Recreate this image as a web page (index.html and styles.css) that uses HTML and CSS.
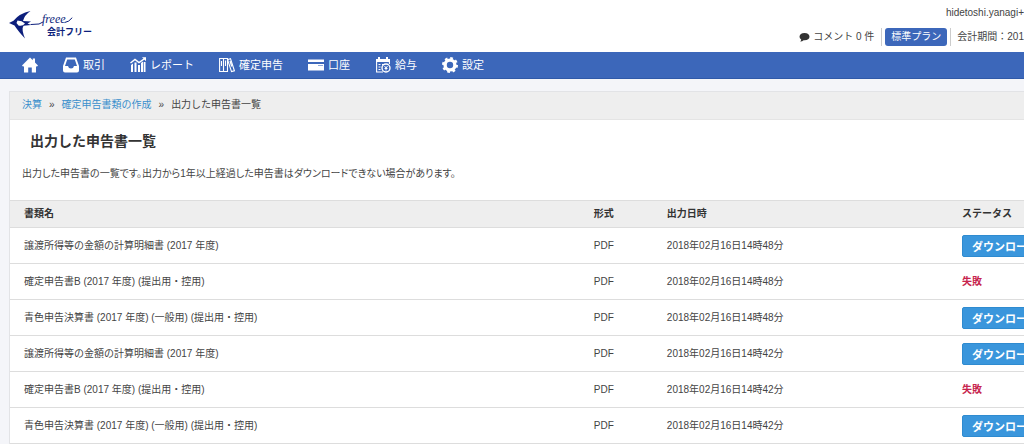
FILE: index.html
```html
<!DOCTYPE html>
<html lang="ja">
<head>
<meta charset="utf-8">
<meta name="viewport" content="width=device-width, initial-scale=1">
<title>出力した申告書一覧</title>
<link rel="stylesheet" href="styles.css">
</head>
<body>
<header class="header">
  <a class="logo" href="#" aria-label="会計フリー">
    <svg width="84" height="30" viewBox="0 0 84 30">
      <path class="logo-fill" fill-rule="evenodd" d="M0 13L4.500 10.800Q10 3.500 21.500 1Q15.500 5 14 11L22 11.500L18.500 13.500L22 15L14.500 15.800Q13 18 13.700 21Q14.300 24.500 16 28.500Q9 21 5.500 15.500ZM8.500 10.500L7.500 13L9.500 15.500Q13.500 16.500 16 13.500Q13 10.700 8.500 10.500Z"/>
      <path class="logo-line" d="M22 14.500L30 14L34 12"/>
      <path class="logo-line" d="M56 12.500Q60 12 63 8"/>
      <text class="logo-script" x="33" y="13">freee</text>
      <text class="logo-name" x="38" y="25">会計フリー</text>
    </svg>
  </a>
  <div class="account">
    <div class="user">hidetoshi.yanagi+</div>
    <div class="status">
      <a class="comments" href="#">
        <svg width="11" height="10" viewBox="0 0 11 10"><path fill="currentColor" d="M5.500 1C8.500 1 10.500 2.600 10.500 4.700S8.500 8.300 5.500 8.300L4.600 8.200Q3.200 9.500 1.200 9.400Q2.200 8.600 2.200 7.500Q.5 6.400 .5 4.700C.5 2.600 2.500 1 5.500 1Z"/></svg>
        <span>コメント 0 件</span>
      </a>
      <span class="plan-wrap"><a class="plan" href="#">標準プラン</a></span>
      <span class="period">会計期間：201</span>
    </div>
  </div>
</header>
<nav class="nav">
  <a class="nav-item" href="#" aria-label="ホーム">
    <svg width="16" height="16" viewBox="0 0 16 16"><path fill="currentColor" d="M8 .5L10.800 3.300V1.500H13V5.500L16 8.500L14.800 9.700L14 9V15.500H9.800V10.500H6.200V15.500H2V9L1.200 9.700L0 8.500Z"/></svg>
  </a>
  <a class="nav-item" href="#">
    <svg width="16" height="16" viewBox="0 0 16 16"><path fill="currentColor" fill-rule="evenodd" d="M3 .5H13L16 9V13.500Q16 15.500 14 15.500H2Q0 15.500 0 13.500V9ZM4.200 2.500L2 9H5Q5.500 11.500 8 11.500T11 9H14L11.800 2.500Z"/></svg>
    <span>取引</span>
  </a>
  <a class="nav-item" href="#">
    <svg width="16" height="16" viewBox="0 0 16 16"><path fill="none" stroke="currentColor" stroke-width="1.500" d="M.5 6L5 2.500L9 5.500L15.500 1"/><path fill="currentColor" d="M12 .3H16V4.200ZM1 8L3 6.500V15H1ZM4.500 5.500H6.500V15H4.500ZM8 8H10V15H8ZM11 6L13 4.500V15H11ZM13.700 5H15.500V15H13.700Z"/></svg>
    <span>レポート</span>
  </a>
  <a class="nav-item" href="#">
    <svg width="16" height="16" viewBox="0 0 16 16"><path fill="none" stroke="currentColor" stroke-width="1.100" d="M.6 1.500H4.500V14.500H.6ZM4.500 1.500H8.500V14.500H4.500ZM9 2.500L11.500 1.700L15.400 13.800L12.500 14.600L9 4ZM2.500 4V9M6.500 3.500V9M11 4L12.700 9.500"/></svg>
    <span>確定申告</span>
  </a>
  <a class="nav-item" href="#">
    <svg width="16" height="16" viewBox="0 0 16 16"><path fill="currentColor" d="M0 2.500H16V5H0ZM0 7H16V13.500H0Z"/><path class="nav-cut" d="M10 8.500H15"/></svg>
    <span>口座</span>
  </a>
  <a class="nav-item" href="#">
    <svg width="16" height="16" viewBox="0 0 16 16"><path fill="currentColor" d="M1 2H3V0H5V2H11V0H13V2H15V5H1Z"/><path fill="none" stroke="currentColor" stroke-width="1.100" d="M1.600 5V15H8M14.400 5V7M3.500 7.500H5.500M7 7.500H9M3.500 10H5.500M3.500 12.500H5.500"/><circle cx="11" cy="11" r="4" fill="none" stroke="currentColor" stroke-width="1.400"/><path fill="none" stroke="currentColor" d="M9.500 9L11 11L12.500 9M11 11V13.500M9.500 11.500H12.500"/></svg>
    <span>給与</span>
  </a>
  <a class="nav-item" href="#">
    <svg width="16" height="16" viewBox="0 0 16 16"><circle cx="8" cy="8" r="4.900" fill="none" stroke="currentColor" stroke-width="3.400"/><circle cx="8" cy="8" r="7" fill="none" stroke="currentColor" stroke-width="2" stroke-dasharray="2.750 2.750"/></svg>
    <span>設定</span>
  </a>
</nav>
<main class="panel">
  <div class="breadcrumb">
    <a href="#">決算</a><span>»</span><a href="#">確定申告書類の作成</a><span>»</span><span>出力した申告書一覧</span>
  </div>
  <h1 class="title">出力した申告書一覧</h1>
  <p class="lead">出力した申告書の一覧です。出力から1年以上経過した申告書はダウンロードできない場合があります。</p>
  <table class="list">
    <thead>
      <tr><th class="col-name">書類名</th><th class="col-type">形式</th><th class="col-date">出力日時</th><th>ステータス</th></tr>
    </thead>
    <tbody>
      <tr><td>譲渡所得等の金額の計算明細書 (2017 年度)</td><td>PDF</td><td>2018年02月16日14時48分</td><td><button class="download" type="button">ダウンロード</button></td></tr>
      <tr><td>確定申告書B (2017 年度) (提出用・控用)</td><td>PDF</td><td>2018年02月16日14時48分</td><td class="failed">失敗</td></tr>
      <tr><td>青色申告決算書 (2017 年度) (一般用) (提出用・控用)</td><td>PDF</td><td>2018年02月16日14時48分</td><td><button class="download" type="button">ダウンロード</button></td></tr>
      <tr><td>譲渡所得等の金額の計算明細書 (2017 年度)</td><td>PDF</td><td>2018年02月16日14時42分</td><td><button class="download" type="button">ダウンロード</button></td></tr>
      <tr><td>確定申告書B (2017 年度) (提出用・控用)</td><td>PDF</td><td>2018年02月16日14時42分</td><td class="failed">失敗</td></tr>
      <tr><td>青色申告決算書 (2017 年度) (一般用) (提出用・控用)</td><td>PDF</td><td>2018年02月16日14時42分</td><td><button class="download" type="button">ダウンロード</button></td></tr>
    </tbody>
  </table>
</main>
</body>
</html>
```
FILE: styles.css
```css
* { box-sizing: border-box; }
body {
  margin: 0;
  background: #f4f5f9;
  color: #444;
  font: 10px/14px "Liberation Sans", "Noto Sans CJK JP", sans-serif;
}
a { color: inherit; text-decoration: none; }
svg { display: block; flex: none; }

.header {
  display: flex;
  justify-content: space-between;
  padding: 6px 0 6px 9px;
  background: #fff;
}
.logo { padding-top: 4px; }
.logo-fill { fill: #0d1f7c; }
.logo-line { fill: none; stroke: #0d1f7c; stroke-linecap: round; }
.logo-script { fill: #0d1f7c; font: italic 12px "Liberation Serif", serif; }
.logo-name { fill: #0d1f7c; font: bold 9px "Noto Sans CJK JP", sans-serif; }
.account {
  display: flex;
  flex-direction: column;
  align-items: flex-end;
  gap: 8px;
  white-space: nowrap;
}
.status { display: flex; align-items: center; }
.comments { display: flex; align-items: center; gap: 3px; padding-right: 7px; }
.comments svg { color: #333; }
.plan-wrap {
  padding: 0 3px;
  border: solid #ccc;
  border-width: 0 1px;
}
.plan {
  display: block;
  padding: 2px 6px;
  border-radius: 3px;
  background: #3c67ba;
  color: #fff;
}
.period { padding-left: 6px; }

.nav {
  display: flex;
  align-items: center;
  gap: 25px;
  height: 27px;
  padding: 0 22px;
  background: #3c67ba;
  border-bottom: 1px solid #2f59a8;
  color: #fff;
  font-size: 11px;
}
.nav-item { display: flex; align-items: center; gap: 4px; }
.nav-cut { fill: none; stroke: #8fa9da; }

.panel {
  margin: 12px 0 0 9px;
  overflow: hidden;
  background: #fff;
  border: solid #e2e3e6;
  border-width: 1px 0 0 1px;
}
.breadcrumb {
  display: flex;
  gap: 7px;
  padding: 6px 12px 7px;
  background: #eee;
  border-bottom: 1px solid #e4e4e4;
}
.breadcrumb a { color: #3a8fcc; }
.title {
  margin: 0;
  padding: 11px 20px;
  color: #333;
  font-size: 14px;
  line-height: 20px;
}
.lead {
  margin: 0;
  padding: 5px 12px 19px;
  font-feature-settings: "palt";
}
.list {
  width: 100%;
  table-layout: fixed;
  border-collapse: collapse;
  white-space: nowrap;
}
.col-name { width: 56.2%; }
.col-type { width: 7.2%; }
.col-date { width: 29.1%; }
.list th, .list td { padding: 0 14px; text-align: left; }
.list th {
  height: 27px;
  background: #eee;
  border: solid #ddd;
  border-width: 1px 0;
  color: #333;
}
.list td { height: 36px; border-bottom: 1px solid #ddd; }
.list .failed { color: #c7254e; font-weight: bold; }
.download {
  display: block;
  padding: 2px 9px;
  border: 1px solid #2f8bd0;
  border-radius: 2px;
  background: #3a96dc;
  color: #fff;
  font: bold 11px/16px "Noto Sans CJK JP", sans-serif;
}
```
